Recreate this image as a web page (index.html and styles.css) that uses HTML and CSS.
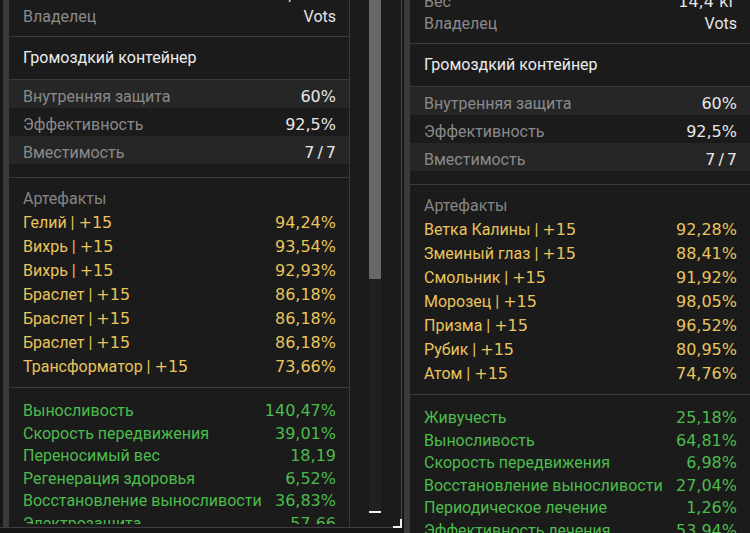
FILE: index.html
```html
<!DOCTYPE html>
<html lang="ru">
<head>
<meta charset="utf-8">
<title>Контейнер</title>
<link rel="stylesheet" href="styles.css">
</head>
<body>
<div class="screen">
  <div class="left-window">
    <div class="strip"></div>
    <div class="panel">
      <div class="clip">
        <div class="content content-left">
          <section class="sec info">
            <div class="row"><span class="lbl">Вес</span><span class="val white">15,95 кг</span></div>
            <div class="row"><span class="lbl">Владелец</span><span class="val white name">Vots</span></div>
          </section>
          <section class="sec title">Громоздкий контейнер</section>
          <section class="sec stats">
            <div class="srow"><span class="lbl">Внутренняя защита</span><span class="val white">60%</span></div>
            <div class="srow"><span class="lbl">Эффективность</span><span class="val white">92,5%</span></div>
            <div class="srow"><span class="lbl">Вместимость</span><span class="val white wide">7/7</span></div>
          </section>
          <section class="sec arts">
            <div class="arow head">Артефакты</div>
            <div class="arow"><span>Гелий | <span class="num">+15</span></span><span class="val">94,24%</span></div>
            <div class="arow"><span>Вихрь | <span class="num">+15</span></span><span class="val">93,54%</span></div>
            <div class="arow"><span>Вихрь | <span class="num">+15</span></span><span class="val">92,93%</span></div>
            <div class="arow"><span>Браслет | <span class="num">+15</span></span><span class="val">86,18%</span></div>
            <div class="arow"><span>Браслет | <span class="num">+15</span></span><span class="val">86,18%</span></div>
            <div class="arow"><span>Браслет | <span class="num">+15</span></span><span class="val">86,18%</span></div>
            <div class="arow"><span>Трансформатор | <span class="num">+15</span></span><span class="val">73,66%</span></div>
          </section>
          <section class="sec bonus">
            <div class="grow"><span>Выносливость</span><span class="val">140,47%</span></div>
            <div class="grow"><span>Скорость передвижения</span><span class="val">39,01%</span></div>
            <div class="grow"><span>Переносимый вес</span><span class="val">18,19</span></div>
            <div class="grow"><span>Регенерация здоровья</span><span class="val">6,52%</span></div>
            <div class="grow"><span>Восстановление выносливости</span><span class="val">36,83%</span></div>
            <div class="grow"><span>Электрозащита</span><span class="val">57,66</span></div>
          </section>
        </div>
      </div>
    </div>
    <div class="scroll-col">
      <div class="track"><div class="thumb"></div></div>
    </div>
  </div>
  <div class="gap"></div>
  <div class="panel panel-right">
    <div class="content content-right">
      <section class="sec info">
        <div class="row"><span class="lbl">Вес</span><span class="val white">14,4 кг</span></div>
        <div class="row"><span class="lbl">Владелец</span><span class="val white name">Vots</span></div>
      </section>
      <section class="sec title">Громоздкий контейнер</section>
      <section class="sec stats">
        <div class="srow"><span class="lbl">Внутренняя защита</span><span class="val white">60%</span></div>
        <div class="srow"><span class="lbl">Эффективность</span><span class="val white">92,5%</span></div>
        <div class="srow"><span class="lbl">Вместимость</span><span class="val white wide">7/7</span></div>
      </section>
      <section class="sec arts">
        <div class="arow head">Артефакты</div>
        <div class="arow"><span>Ветка Калины | <span class="num">+15</span></span><span class="val">92,28%</span></div>
        <div class="arow"><span>Змеиный глаз | <span class="num">+15</span></span><span class="val">88,41%</span></div>
        <div class="arow"><span>Смольник | <span class="num">+15</span></span><span class="val">91,92%</span></div>
        <div class="arow"><span>Морозец | <span class="num">+15</span></span><span class="val">98,05%</span></div>
        <div class="arow"><span>Призма | <span class="num">+15</span></span><span class="val">96,52%</span></div>
        <div class="arow"><span>Рубик | <span class="num">+15</span></span><span class="val">80,95%</span></div>
        <div class="arow"><span>Атом | <span class="num">+15</span></span><span class="val">74,76%</span></div>
      </section>
      <section class="sec bonus">
        <div class="grow"><span>Живучесть</span><span class="val">25,18%</span></div>
        <div class="grow"><span>Выносливость</span><span class="val">64,81%</span></div>
        <div class="grow"><span>Скорость передвижения</span><span class="val">6,98%</span></div>
        <div class="grow"><span>Восстановление выносливости</span><span class="val">27,04%</span></div>
        <div class="grow"><span>Периодическое лечение</span><span class="val">1,26%</span></div>
        <div class="grow"><span>Эффективность лечения</span><span class="val">53,94%</span></div>
      </section>
    </div>
  </div>
</div>
</body>
</html>
```
FILE: styles.css
```css
html, body {
  margin: 0;
  padding: 0;
  background: #161616;
}
body {
  font-family: Roboto, "Noto Sans", sans-serif;
  font-size: 16px;
  color: #8a8a8a;
}
.screen {
  display: flex;
  width: 750px;
  height: 533px;
  overflow: hidden;
}
.left-window {
  position: relative;
  display: flex;
  flex: none;
  height: 527px;
  border-right: 1px solid #4a4a4a;
  border-bottom: 1px solid #3e3e3e;
}
.left-window::after {
  content: "";
  position: absolute;
  right: -1px;
  bottom: -1px;
  width: 7px;
  height: 7px;
  border-right: 2px solid #f0f0f0;
  border-bottom: 2px solid #f0f0f0;
}
.strip {
  flex: none;
  width: 5px;
  border-left: 3px solid #161616;
  background: #3a3a3a;
}
.panel {
  flex: none;
  width: 340px;
  background: #1b1b1b;
  border-left: 1px solid #3a3a3a;
  border-right: 1px solid #3a3a3a;
  overflow: hidden;
}
.clip {
  height: 524px;
  overflow: hidden;
}
.panel-right {
  height: 533px;
}
.content-left { margin-top: -22px; }
.content-right { margin-top: -15px; }

.sec {
  border-bottom: 1px solid #3a3a3a;
}
.row, .srow, .arow, .grow {
  display: flex;
  justify-content: space-between;
  align-items: baseline;
  padding: 0 13px 0 14px;
  white-space: nowrap;
}
.info {
  padding: 6px 0 8px;
}
.row {
  line-height: 22px;
}
.title {
  height: 42px;
  line-height: 42px;
  padding-left: 14px;
  color: #ececec;
}
.stats {
  padding-bottom: 13px;
}
.srow {
  height: 22px;
  padding-top: 6px;
  line-height: 22px;
}
.srow:nth-child(odd) {
  background: #262626;
}
.arts {
  padding: 9px 0 8px;
  color: #e8c45c;
}
.arow {
  line-height: 24px;
}
.arow.head {
  color: #858585;
}
.bonus {
  padding-top: 12px;
  border-bottom: none;
  color: #4cbc4c;
}
.grow {
  line-height: 22.5px;
}
.val, .num {
  font-family: "DejaVu Sans", sans-serif;
}
.white {
  color: #e6e6e6;
}
.name {
  font-family: Roboto, sans-serif;
}
.wide {
  letter-spacing: 3px;
  margin-right: -3px;
}
.scroll-col {
  flex: none;
  width: 51px;
  background: #1b1b1b;
}
.track {
  width: 12px;
  height: 511px;
  margin-left: 19px;
  background: #202020;
  border-bottom: 2px solid #f0f0f0;
}
.thumb {
  height: 279px;
  background: #676767;
}
.gap {
  flex: none;
  width: 5px;
  border-left: 2px solid #161616;
  background: #3a3a3a;
}
```
